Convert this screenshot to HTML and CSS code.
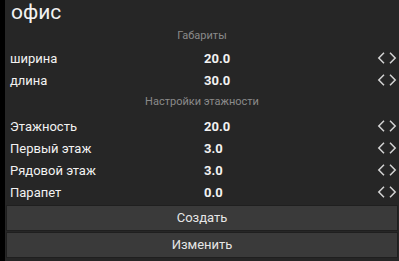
FILE: index.html
```html
<!DOCTYPE html>
<html>
<head>
<meta charset="utf-8">
<link rel="stylesheet" href="styles.css">
</head>
<body>
<div class="panel">
  <div class="title">офис</div>
  <div class="section">Габариты</div>
  <div class="row"><span class="label">ширина</span><span class="value">20.0</span><svg class="arrows" width="20" height="12" viewBox="0 0 20 12"><path d="M7 0.8 L1.8 6 L7 11.2 M13 0.8 L18.2 6 L13 11.2"/></svg></div>
  <div class="row"><span class="label">длина</span><span class="value">30.0</span><svg class="arrows" width="20" height="12" viewBox="0 0 20 12"><path d="M7 0.8 L1.8 6 L7 11.2 M13 0.8 L18.2 6 L13 11.2"/></svg></div>
  <div class="section second">Настройки этажности</div>
  <div class="row"><span class="label">Этажность</span><span class="value">20.0</span><svg class="arrows" width="20" height="12" viewBox="0 0 20 12"><path d="M7 0.8 L1.8 6 L7 11.2 M13 0.8 L18.2 6 L13 11.2"/></svg></div>
  <div class="row"><span class="label">Первый этаж</span><span class="value">3.0</span><svg class="arrows" width="20" height="12" viewBox="0 0 20 12"><path d="M7 0.8 L1.8 6 L7 11.2 M13 0.8 L18.2 6 L13 11.2"/></svg></div>
  <div class="row"><span class="label">Рядовой этаж</span><span class="value">3.0</span><svg class="arrows" width="20" height="12" viewBox="0 0 20 12"><path d="M7 0.8 L1.8 6 L7 11.2 M13 0.8 L18.2 6 L13 11.2"/></svg></div>
  <div class="row"><span class="label">Парапет</span><span class="value">0.0</span><svg class="arrows" width="20" height="12" viewBox="0 0 20 12"><path d="M7 0.8 L1.8 6 L7 11.2 M13 0.8 L18.2 6 L13 11.2"/></svg></div>
  <div class="buttons">
    <div class="btn">Создать</div>
    <div class="btn">Изменить</div>
  </div>
</div>
</body>
</html>
```
FILE: styles.css
```css
html, body {
  margin: 0;
  padding: 0;
  background: #000;
}
body {
  width: 399px;
  height: 261px;
  overflow: hidden;
  font-family: Roboto, "Liberation Sans", sans-serif;
}
.panel {
  margin-left: 5px;
  width: 394px;
  height: 261px;
  background: #262626;
  display: flex;
  flex-direction: column;
}
.title {
  height: 24px;
  line-height: 24px;
  font-size: 21px;
  color: #f2f2f2;
  padding-left: 6px;
}
.section {
  height: 23px;
  line-height: 23px;
  font-size: 11px;
  color: #8a8a8a;
  text-align: center;
}
.section.second {
  height: 24px;
  line-height: 22px;
}
.row {
  height: 22px;
  display: flex;
  align-items: center;
  color: #f2f2f2;
  font-size: 13px;
}
.label {
  width: 194px;
  padding-left: 5px;
}
.value {
  flex: 1;
  font-weight: bold;
}
.arrows {
  margin-right: 2px;
}
.arrows path {
  fill: none;
  stroke: #d4d4d4;
  stroke-width: 1.5;
}
.buttons {
  margin-top: 2px;
  padding: 0 1px;
  display: flex;
  flex-direction: column;
  gap: 1px;
}
.btn {
  height: 24px;
  line-height: 24px;
  background: #3a3a3a;
  border: 1px solid #1f1f1f;
  color: #e6e6e6;
  font-size: 13px;
  text-align: center;
}
```
